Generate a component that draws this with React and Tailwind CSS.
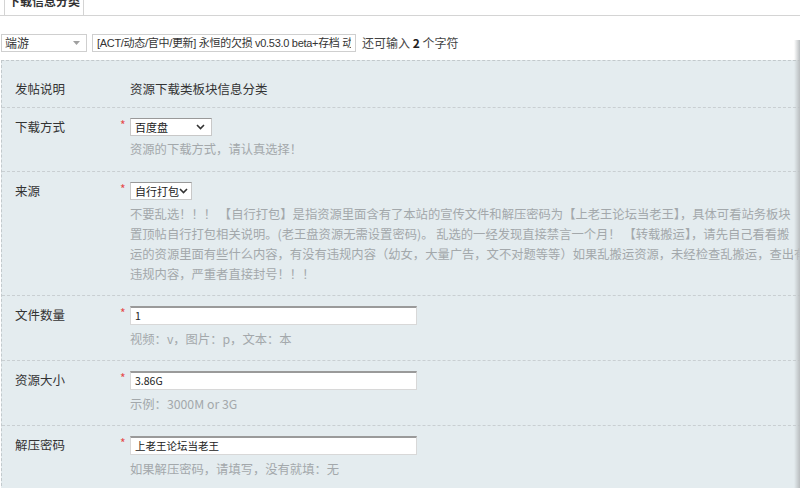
import React from "react";

const font = { fontFamily: '"Noto Sans CJK SC", "Noto Sans", sans-serif' };
const titleFont = { fontFamily: '"Liberation Sans", "Noto Sans CJK SC", sans-serif' };

function Chevron() {
  return (
    <svg width="9" height="6" viewBox="0 0 9 6" className="shrink-0">
      <path d="M1 1 L4.5 4.5 L8 1" fill="none" stroke="#333" strokeWidth="1.6" />
    </svg>
  );
}

function FakeSelect({ w, text, pr = "pr-[6px]" }) {
  return (
    <div
      className={`${w} ${pr} h-[18px] bg-white border border-[#c8c8c8] border-t-[#999] flex items-center justify-between pl-[4px] text-[11px] leading-[16px] text-[#222] whitespace-nowrap`}
    >
      <span>{text}</span>
      <Chevron />
    </div>
  );
}

function FakeInput({ text }) {
  return (
    <div className="w-[287px] h-[19px] bg-white border border-[#d8d8d8] border-t-[2px] border-t-[#9a9a9a] flex items-center pl-[4px] text-[10.5px] leading-[16px] text-[#222]">
      {text}
    </div>
  );
}

function Row({ label, children, hint, lines, gap = "mt-[3px]", pb = "pb-[11px]" }) {
  return (
    <div className={`flex pl-[13px] pt-[10px] ${pb} border-b border-dashed border-[#c9cfd2]`}>
      <div className="w-[105px] text-[12.5px] leading-[18px] text-[#333]">{label}</div>
      <div className="w-[10px] text-[#e54b4b] text-[12px] leading-[14px]">*</div>
      <div className="flex flex-col">
        {children}
        {hint && (
          <div className={`${gap} text-[12.3px] leading-[20px] text-[#a3a8ab] whitespace-nowrap`}>{hint}</div>
        )}
        {lines && (
          <div className={`${gap} text-[12.3px] leading-[20px] text-[#a3a8ab] whitespace-nowrap`}>
            {lines.map((l, i) => (
              <div key={i}>{l}</div>
            ))}
          </div>
        )}
      </div>
    </div>
  );
}

export default function App() {
  return (
    <div className="relative w-[800px] h-[488px] overflow-hidden bg-white" style={font}>
      {/* tab bar */}
      <div className="flex h-[16px] border-b border-[#d4d4d4]">
        <div className="w-[4px]" />
        <div className="w-[80px] h-[16px] -mt-px bg-white border-x border-[#d4d4d4] flex justify-center">
          <span className="text-[12px] font-bold text-[#333] leading-[12px] -mt-[4px] whitespace-nowrap">下载信息分类</span>
        </div>
      </div>

      {/* subject row */}
      <div className="flex items-center mt-[18px] pl-[1px] h-[18px]">
        <div className="w-[86px] h-[18px] border border-[#cfcfcf] bg-white flex items-center justify-between pl-[3px] pr-[6px] text-[12px] text-[#333]">
          <span>端游</span>
          <svg width="7" height="4" viewBox="0 0 7 4">
            <path d="M0 0 L7 0 L3.5 4 Z" fill="#a0a0a0" />
          </svg>
        </div>
        <div
          className="ml-[5px] w-[264px] h-[18px] border border-[#cfcfcf] bg-white flex items-center pl-[4px] text-[11px] tracking-[-0.3px] text-[#333]"
          style={titleFont}
        >
          <span className="block w-[254px] overflow-hidden whitespace-nowrap">[ACT/动态/官中/更新] 永恒的欠损 v0.53.0 beta+存档 动态</span>
        </div>
        <div className="ml-[6px] text-[12px] text-[#444] whitespace-nowrap">
          还可输入 <b className="text-[#222]">2</b> 个字符
        </div>
      </div>

      {/* form */}
      <div className="mt-[8px] ml-[1px] w-[830px] bg-[#e4ecef] border-t border-l border-dashed border-[#c2c9cc]">
        <div className="flex pl-[13px] pt-[19px] pb-[9px] border-b border-dashed border-[#c9cfd2] text-[12.5px] leading-[18px] text-[#333]">
          <div className="w-[115px]">发帖说明</div>
          <div>资源下载类板块信息分类</div>
        </div>

        <Row label="下载方式" hint="资源的下载方式，请认真选择！" pb="pb-[12px]">
          <FakeSelect w="w-[82px]" text="百度盘" />
        </Row>

        <Row
          label="来源"
          gap="mt-[4px]"
          lines={[
            "不要乱选！！！ 【自行打包】是指资源里面含有了本站的宣传文件和解压密码为【上老王论坛当老王】，具体可看站务板块",
            "置顶帖自行打包相关说明。(老王盘资源无需设置密码)。 乱选的一经发现直接禁言一个月！ 【转载搬运】，请先自己看看搬",
            "运的资源里面有些什么内容，有没有违规内容（幼女，大量广告，文不对题等等）如果乱搬运资源，未经检查乱搬运，查出有",
            "违规内容，严重者直接封号！！！",
          ]}
        >
          <FakeSelect w="w-[62px]" text="自行打包" pr="pr-[3px]" />
        </Row>

        <Row label="文件数量" hint="视频：v，图片：p，文本：本" gap="mt-[4px]">
          <FakeInput text="1" />
        </Row>

        <Row label="资源大小" hint="示例：3000M or 3G" gap="mt-[4px]">
          <FakeInput text="3.86G" />
        </Row>

        <Row label="解压密码" hint="如果解压密码，请填写，没有就填：无" gap="mt-[4px]">
          <FakeInput text="上老王论坛当老王" />
        </Row>
      </div>

      {/* right edge shade */}
      <div className="absolute right-0 top-[40px] bottom-0 w-[6px] bg-gradient-to-r from-transparent to-[#b9bdbf]" />
    </div>
  );
}
